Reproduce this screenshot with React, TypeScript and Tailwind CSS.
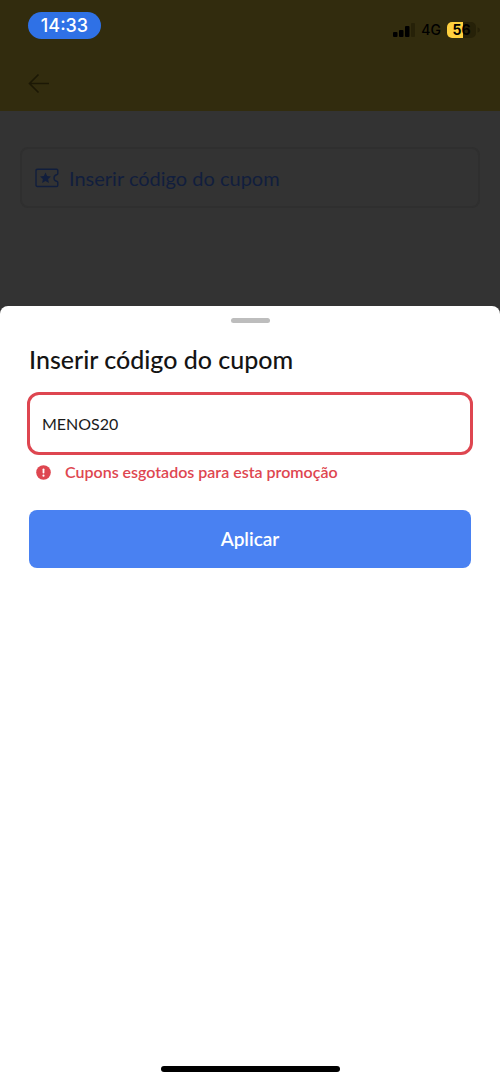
import { useState } from 'react'

function StatusBar() {
  return (
    <div className="flex items-start justify-between pt-3 pl-7 pr-5">
      <span className="flex h-[27px] w-[73px] items-center justify-center rounded-full bg-[#2f71e6] font-[Inter,sans-serif] text-lg font-medium text-white">
        14:33
      </span>
      <div className="flex h-9 items-center gap-1.5 text-black">
        <svg width="22" height="14" viewBox="0 0 22 14" aria-hidden="true">
          <rect x="0" y="9" width="4.500" height="5" rx="1" fill="#000" />
          <rect x="6" y="7" width="4.500" height="7" rx="1" fill="#000" />
          <rect x="12" y="3" width="4.500" height="11" rx="1" fill="#000" />
          <rect x="18" y="0" width="4" height="14" rx="1" fill="#262108" />
        </svg>
        <span className="font-[Inter,sans-serif] text-sm font-medium">4G</span>
        <svg width="33" height="18" viewBox="0 0 33 18" role="img" aria-label="56">
          <rect x="0" y="1" width="29" height="16" rx="5" fill="#262108" />
          <path d="M5 1h11v16H5a5 5 0 0 1-5-5V6a5 5 0 0 1 5-5z" fill="#fed03f" />
          <path d="M30.500 6.500a2.500 2.500 0 0 1 0 5z" fill="#262108" />
          <text
            x="14.500"
            y="14"
            textAnchor="middle"
            fontFamily="Inter, sans-serif"
            fontSize="14"
            fontWeight="700"
            fill="#000"
          >
            56
          </text>
        </svg>
      </div>
    </div>
  )
}

function CouponIcon() {
  return (
    <svg width="24" height="20" viewBox="0 0 24 20" fill="none" aria-hidden="true">
      <path
        d="M2.500 1.200H21.500Q22.800 1.200 22.800 2.500V5.500Q22.800 6.400 21.600 6.700A3.400 3.400 0 0 0 21.600 13.300Q22.800 13.600 22.800 14.500V17.200Q22.800 18.500 21.500 18.500H2.500Q1 18.500 1 17V2.700Q1 1.200 2.500 1.200Z"
        stroke="currentColor"
        strokeWidth="1.400"
      />
      <path
        d="M10.500 4.600l1.600 3.400 3.900.5-2.900 2.600.8 3.900-3.400-2-3.400 2 .8-3.900-2.900-2.600 3.900-.5z"
        fill="currentColor"
      />
    </svg>
  )
}

export default function App() {
  const [code, setCode] = useState('MENOS20')

  return (
    <div className="flex min-h-screen flex-col bg-[#333333] font-[Lato,sans-serif]">
      {/* Dimmed page */}
      <header className="h-[111px] bg-[#322c0e]">
        <StatusBar />
        <button type="button" aria-label="Voltar" className="mt-6 ml-7 block text-[#1c1805]">
          <svg width="22" height="22" viewBox="0 0 22 22" fill="none" stroke="currentColor" strokeWidth="1.600">
            <path d="M21 11.500H1.500M10.500 2.500l-9 9 9 9" />
          </svg>
        </button>
      </header>

      <main className="h-[195px] px-5 pt-9">
        <button
          type="button"
          className="flex h-[61px] w-full items-center gap-2.5 rounded-lg border-2 border-[#2f2f2f] px-[13px] text-xl text-[#111e3d]"
        >
          <CouponIcon />
          Inserir código do cupom
        </button>
      </main>

      {/* Bottom sheet */}
      <section className="flex grow flex-col rounded-t-lg bg-white px-[29px]">
        <div className="mx-auto mt-3 h-[5px] w-[39px] rounded-full bg-[#bdbdbd]" />

        <form className="flex flex-col" onSubmit={(e) => e.preventDefault()}>
          <h1 className="mt-5 text-[25px]/8 font-medium text-[#141414]">
            <label htmlFor="coupon">Inserir código do cupom</label>
          </h1>
          <input
            id="coupon"
            type="text"
            value={code}
            onChange={(e) => setCode(e.target.value)}
            aria-invalid="true"
            aria-describedby="coupon-error"
            className="-mx-0.5 mt-[17px] h-[63px] rounded-xl border-3 border-[#de4650] bg-white px-3 text-base text-[#1a1a1a] outline-none"
          />
          <p id="coupon-error" className="mt-[5px] flex items-center gap-3.5 pl-[7px] text-base font-semibold text-[#de4650]">
            <svg width="15" height="15" viewBox="0 0 15 15" aria-hidden="true">
              <circle cx="7.500" cy="7.500" r="7.300" fill="currentColor" />
              <rect x="6.600" y="3.400" width="1.800" height="5.200" rx=".8" fill="#fff" />
              <circle cx="7.500" cy="10.700" r="1.100" fill="#fff" />
            </svg>
            Cupons esgotados para esta promoção
          </p>
          <button
            type="submit"
            className="mt-[26px] h-[58px] rounded-lg bg-[#4981f2] text-[19px] font-semibold text-white"
          >
            Aplicar
          </button>
        </form>

        <div className="mx-auto mt-auto mb-2.5 h-1.5 w-[179px] rounded-full bg-black" />
      </section>
    </div>
  )
}
